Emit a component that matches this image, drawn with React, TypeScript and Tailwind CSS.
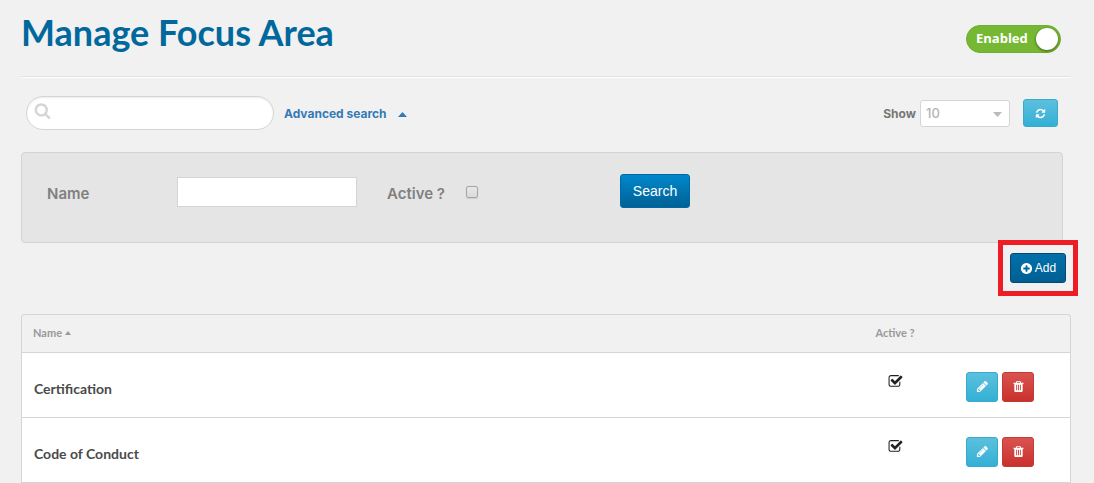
import { useState } from 'react'

const icons = {
  search:
    'M1216 832q0-185-131.5-316.5t-316.5-131.5-316.5 131.5-131.5 316.5 131.5 316.5 316.5 131.5 316.5-131.5 131.5-316.5zm512 832q0 52-38 90t-90 38q-54 0-90-38l-343-342q-179 124-399 124-143 0-273.5-55.5t-225-150-150-225-55.5-273.5 55.5-273.5 150-225 225-150 273.5-55.5 273.5 55.5 225 150 150 225 55.5 273.5q0 220-124 399l343 343q37 37 37 90z',
  refresh:
    'M1639 1056q0 5-1 7-64 268-268 434.5t-478 166.5q-146 0-282.5-55t-243.5-157l-129 129q-19 19-45 19t-45-19-19-45v-448q0-26 19-45t45-19h448q26 0 45 19t19 45-19 45l-137 137q71 66 161 102t187 36q134 0 250-65t186-179q11-17 53-117 8-23 30-23h192q13 0 22.5 9.5t9.5 22.5zm25-800v448q0 26-19 45t-45 19h-448q-26 0-45-19t-19-45 19-45l138-138q-148-137-349-137-134 0-250 65t-186 179q-11 17-53 117-8 23-30 23h-199q-13 0-22.5-9.5t-9.5-22.5v-7q65-268 270-434.5t480-166.5q146 0 284 55.5t245 156.5l130-129q19-19 45-19t45 19 19 45z',
  plus:
    'M1344 960v-128q0-26-19-45t-45-19h-256v-256q0-26-19-45t-45-19h-128q-26 0-45 19t-19 45v256h-256q-26 0-45 19t-19 45v128q0 26 19 45t45 19h256v256q0 26 19 45t45 19h128q26 0 45-19t19-45v-256h256q26 0 45-19t19-45zm320-64q0 209-103 385.5t-279.5 279.5-385.5 103-385.5-103-279.5-279.5-103-385.5 103-385.5 279.5-279.5 385.5-103 385.5 103 279.5 279.5 103 385.5z',
  checked:
    'M1472 930v318q0 119-84.5 203.5t-203.5 84.5h-832q-119 0-203.5-84.5t-84.5-203.5v-832q0-119 84.5-203.5t203.5-84.5h832q63 0 117 25 15 7 18 23 3 17-9 29l-49 49q-10 10-23 10-3 0-9-2-23-6-45-6h-832q-66 0-113 47t-47 113v832q0 66 47 113t113 47h832q66 0 113-47t47-113v-254q0-13 9-22l64-64q10-10 23-10 6 0 12 3 20 8 20 29zm231-489l-814 814q-24 24-57 24t-57-24l-430-430q-24-24-24-57t24-57l110-110q24-24 57-24t57 24l263 263 647-647q24-24 57-24t57 24l110 110q24 24 24 57t-24 57z',
  pencil:
    'M491 1536l91-91-235-235-91 91v107h128v128h107zm523-928q0-22-22-22-10 0-17 7l-542 542q-7 7-7 17 0 22 22 22 10 0 17-7l542-542q7-7 7-17zm-54-192l416 416-832 832h-416v-416zm683 96q0 53-37 90l-166 166-416-416 166-165q36-38 90-38 53 0 91 38l235 234q37 39 37 91z',
  trash:
    'M704 1376v-704q0-14-9-23t-23-9h-64q-14 0-23 9t-9 23v704q0 14 9 23t23 9h64q14 0 23-9t9-23zm256 0v-704q0-14-9-23t-23-9h-64q-14 0-23 9t-9 23v704q0 14 9 23t23 9h64q14 0 23-9t9-23zm256 0v-704q0-14-9-23t-23-9h-64q-14 0-23 9t-9 23v704q0 14 9 23t23 9h64q14 0 23-9t9-23zm-544-992h448l-48-117q-7-9-17-11h-317q-10 2-17 11zm928 32v64q0 14-9 23t-23 9h-96v948q0 83-47 143.5t-113 60.5h-832q-66 0-113-58.5t-47-141.5v-952h-96q-14 0-23-9t-9-23v-64q0-14 9-23t23-9h309l70-167q15-37 54-63t79-26h320q40 0 79 26t54 63l70 167h309q14 0 23 9t9 23z',
}

function Icon({ name, className, label }: { name: keyof typeof icons; className: string; label?: string }) {
  return (
    <svg
      viewBox="0 0 1792 1792"
      fill="currentColor"
      className={className}
      role={label ? 'img' : undefined}
      aria-label={label}
      aria-hidden={label ? undefined : true}
    >
      <path d={icons[name]} />
    </svg>
  )
}

function Caret({ className, down = false }: { className: string; down?: boolean }) {
  return (
    <svg viewBox="0 0 10 5" preserveAspectRatio="none" fill="currentColor" className={className} aria-hidden="true">
      <path d={down ? 'M0 0h10L5 5z' : 'M0 5h10L5 0z'} />
    </svg>
  )
}

const areas = ['Certification', 'Code of Conduct']

const blueButton = 'bg-linear-to-b from-[#5bc0de] to-[#31b0d5] border-[#3aa9ca]'
const redButton = 'bg-linear-to-b from-[#d9534f] to-[#c9302c] border-[#c13a36]'

export default function App() {
  const [enabled, setEnabled] = useState(true)
  const [advanced, setAdvanced] = useState(true)

  return (
    <main className="min-h-screen overflow-hidden bg-[#f1f1f1] pl-[21px] pr-[23px] font-['Lato',sans-serif]">
      <header className="flex h-[77px] items-start justify-between border-b border-[#e0e0e0] pr-[10px] shadow-[0_1px_0_#fff]">
        <h1 className="pt-[10px] text-[36px] leading-[44px] font-bold text-[#00689d]">Manage Focus Area</h1>
        <label className="mt-[25px] flex h-7 w-[95px] cursor-pointer items-center justify-between rounded-full border border-[#6fb030] bg-[#76b833] pr-[2px] pl-[9px] font-['Open_Sans',sans-serif] text-[13px] font-bold text-white">
          <input
            type="checkbox"
            role="switch"
            className="sr-only"
            checked={enabled}
            onChange={(e) => setEnabled(e.target.checked)}
          />
          Enabled
          <span className="size-[22px] rounded-full bg-white shadow-[0_1px_3px_rgba(0,0,0,0.5)]" />
        </label>
      </header>

      <div className="flex items-center justify-between pt-[19px] pr-[13px] pl-[5px] font-['Inter',sans-serif] text-[12px] font-bold">
        <div className="flex items-center gap-[10px]">
          <div className="relative">
            <Icon name="search" className="absolute top-[6px] left-[8px] size-[17px] text-[#d5d5d5]" />
            <input
              type="search"
              aria-label="Search focus areas"
              className="block h-[34px] w-[248px] rounded-full border border-[#d5d5d5] bg-white pr-3 pl-8 font-normal text-gray-700 shadow-[inset_0_1px_2px_rgba(0,0,0,0.08)] outline-none"
            />
          </div>
          <button
            type="button"
            aria-expanded={advanced}
            onClick={() => setAdvanced(!advanced)}
            className="flex items-center gap-[11px] pt-[2px] text-[#337ab7]"
          >
            Advanced search
            <Caret className="h-[5px] w-[9px]" down={!advanced} />
          </button>
        </div>
        <div className="flex items-center">
          <label htmlFor="page-size" className="pt-[2px] pr-1 text-[#777]">Show</label>
          <div className="relative mr-[13px]">
            <select
              id="page-size"
              className="block h-[27px] w-[90px] appearance-none rounded-[3px] border border-[#d5d5d5] bg-white pt-[2px] pl-[5px] text-[13px] font-medium text-[#b5b5b5]"
            >
              <option>10</option>
              <option>25</option>
              <option>50</option>
            </select>
            <Caret down className="pointer-events-none absolute top-[12px] right-[8px] h-[5px] w-[9px] text-[#bbb]" />
          </div>
          <button
            type="button"
            aria-label="Refresh"
            className={`flex h-7 w-[35px] items-center justify-center rounded-[3px] border text-white ${blueButton}`}
          >
            <Icon name="refresh" className="size-[11px]" />
          </button>
        </div>
      </div>

      {advanced && (
        <form
          onSubmit={(e) => e.preventDefault()}
          className="mt-[22px] mr-2 flex h-[91px] items-start rounded border border-[#d3d3d3] bg-[#e5e5e5] pt-[21px] pl-[25px] font-['Inter',sans-serif] text-[15px] font-semibold text-[#808080]"
        >
          <div className="flex h-9 items-center">
            <label htmlFor="area-name" className="w-[130px] pt-1">Name</label>
            <input
              id="area-name"
              type="text"
              className="h-[30px] w-[180px] border border-[#d5d5d5] bg-white px-2 text-[14px] font-normal text-gray-700 outline-none"
            />
            <label htmlFor="area-active" className="ml-[30px] w-[79px] pt-1">Active ?</label>
            <input
              id="area-active"
              type="checkbox"
              className="size-3 appearance-none rounded-[2px] border border-[#a5a5a5] bg-linear-to-b from-[#e8e8e8] to-[#dadada] shadow-[0_1px_1px_rgba(0,0,0,0.1)] checked:from-[#0088cc] checked:to-[#006195]"
            />
          </div>
          <button
            type="submit"
            className="ml-[142px] h-[34px] w-[70px] rounded-[3px] border border-[#0069a3] bg-linear-to-b from-[#0088cc] to-[#006195] font-['Liberation_Sans',Arial,sans-serif] text-[14px] font-normal text-white"
          >
            Search
          </button>
        </form>
      )}

      <div className="flex justify-end pt-[10px] pr-[5px] pb-[31px]">
        <div className="relative">
          <button
            type="button"
            className="flex h-[30px] w-14 items-center justify-center gap-[2px] rounded-[3px] border border-[#0c4570] bg-linear-to-b from-[#0071ab] to-[#005f93] font-['Liberation_Sans',Arial,sans-serif] text-[12px] text-white"
          >
            <Icon name="plus" className="size-[13px]" />
            Add
          </button>
          {/* red callout around the button */}
          <div className="pointer-events-none absolute -inset-x-3 -inset-y-[13px] border-[5px] border-[#ee1c25]" />
        </div>
      </div>

      <div className="rounded-t border border-b-0 border-[#d5d5d5]">
        <table className="w-full table-fixed border-collapse">
          <thead className="text-[11px] font-bold text-[#999]">
            <tr className="h-[37px] border-b border-[#d5d5d5]">
              <th scope="col" className="pl-[11px] text-left">
                <button type="button" className="flex items-center gap-[3px]">
                  Name
                  <Caret className="h-[4px] w-[6px]" />
                </button>
              </th>
              <th scope="col" className="w-[142px] text-center">Active ?</th>
              <th scope="col" aria-label="Actions" className="w-[104px]" />
            </tr>
          </thead>
          <tbody className="bg-white text-[14px] font-bold text-[#4a4a4a]">
            {areas.map((area) => (
              <tr key={area} className="h-[65px] border-b border-[#d5d5d5]">
                <td className="pt-2 pl-3">{area}</td>
                <td className="pb-[6px]">
                  <Icon name="checked" label="Active" className="mx-auto size-[15px] text-[#222]" />
                </td>
                <td className="pt-1">
                  <div className="flex gap-1 text-white">
                    <button
                      type="button"
                      aria-label={`Edit ${area}`}
                      className={`flex h-[30px] w-8 items-center justify-center rounded-[3px] border ${blueButton}`}
                    >
                      <Icon name="pencil" className="size-[13px]" />
                    </button>
                    <button
                      type="button"
                      aria-label={`Delete ${area}`}
                      className={`flex h-[30px] w-8 items-center justify-center rounded-[3px] border ${redButton}`}
                    >
                      <Icon name="trash" className="size-[13px]" />
                    </button>
                  </div>
                </td>
              </tr>
            ))}
          </tbody>
        </table>
      </div>
    </main>
  )
}
